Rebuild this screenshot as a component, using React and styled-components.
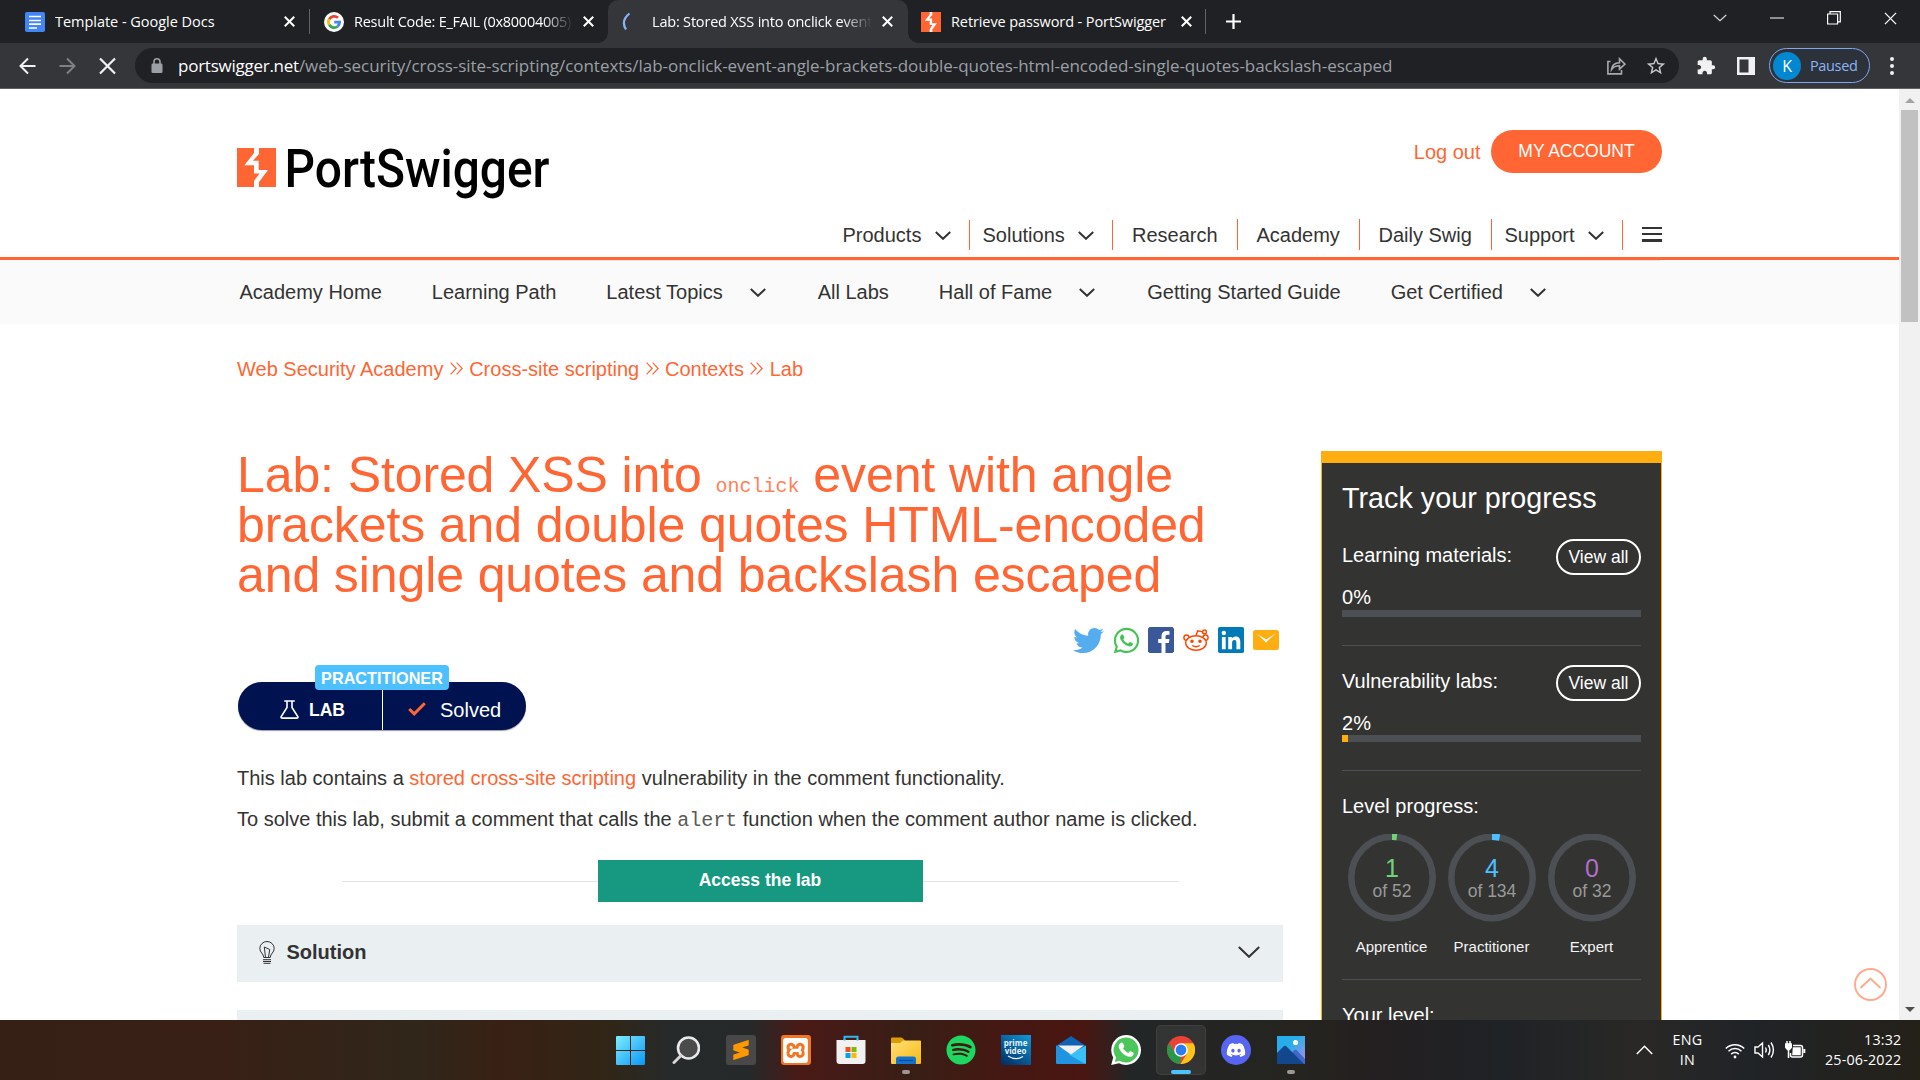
import React from 'react';
import styled, { createGlobalStyle, css } from 'styled-components';
import { FaTwitter, FaWhatsapp, FaDiscord, FaSpotify } from 'react-icons/fa';
import { MdExtension, MdStarBorder } from 'react-icons/md';
import { SiSublimetext, SiXampp } from 'react-icons/si';

const ORANGE = '#ff6633';
const UI = '"Open Sans", "Noto Sans", sans-serif';
const ARIAL = '"Liberation Sans", Arial, sans-serif';
const MONO = '"Liberation Mono", "Courier New", monospace';

const GlobalStyle = createGlobalStyle`
  *, *::before, *::after { box-sizing: border-box; }
  body { margin: 0; overflow: hidden; background: #fff; }
  svg { display: block; flex: none; }
`;

const Screen = styled.div`
  width: 1920px;
  height: 1080px;
  display: grid;
  grid-template-rows: 43px 46px 931px 60px;
  overflow: hidden;
  font-family: ${ARIAL};
`;

/* ---------- browser: tab strip ---------- */
const TabStrip = styled.div`
  display: flex;
  background: #202124;
  color: #fff;
  font-family: ${UI};
`;
const Tab = styled.div`
  position: relative;
  display: flex;
  align-items: center;
  width: ${p => p.$w}px;
  height: 43px;
  padding-left: ${p => p.$pad}px;
  ${p => p.$active && css`
    background: #35363a;
    border-radius: 10px 10px 0 0;
    &::before, &::after {
      content: '';
      position: absolute;
      bottom: 0;
      width: 10px;
      height: 10px;
    }
    &::before { left: -10px; background: radial-gradient(circle at 0 0, transparent 9.5px, #35363a 10px); }
    &::after { right: -10px; background: radial-gradient(circle at 100% 0, transparent 9.5px, #35363a 10px); }
  `}
`;
const TabTitle = styled.span`
  width: ${p => p.$w}px;
  margin-left: ${p => p.$ml || 10}px;
  margin-right: ${p => p.$mr || 0}px;
  overflow: hidden;
  white-space: nowrap;
  font-size: 14.5px;
  line-height: 24px;
  letter-spacing: ${p => p.$ls || 0}px;
  ${p => p.$fade && css`
    mask-image: linear-gradient(90deg, #000 calc(100% - 30px), transparent);
  `}
`;
const Divider = styled.i`
  width: 1px;
  height: 25px;
  margin-top: 9px;
  background: #606368;
`;
const NewTab = styled.div`
  display: flex;
  align-items: center;
  margin-left: 20px;
`;
const WindowControls = styled.div`
  display: flex;
  gap: 43px;
  height: 36px;
  align-items: center;
  margin-left: auto;
  margin-right: 23px;
`;

/* ---------- browser: toolbar ---------- */
const Toolbar = styled.div`
  display: flex;
  align-items: center;
  background: #35363a;
  border-bottom: 1px solid #606164;
  padding: 0 0 0 18px;
  font-family: ${UI};
`;
const NavButtons = styled.div`
  display: flex;
  gap: 20px;
  width: 117px;
`;
const Omnibox = styled.div`
  display: flex;
  align-items: center;
  width: 1544px;
  height: 35px;
  padding: 0 12px 0 16px;
  border-radius: 18px;
  background: #202124;
`;
const Url = styled.span`
  flex: 1;
  margin-left: 15px;
  white-space: nowrap;
  font-size: 17px;
  line-height: 30px;
  letter-spacing: -0.04px;
  color: #9aa0a6;
  b { font-weight: 400; color: #fff; letter-spacing: -0.25px; }
`;
const OmniActions = styled.div`
  display: flex;
  gap: 19px;
  align-items: center;
`;
const Extensions = styled.div`
  display: flex;
  align-items: center;
  gap: 21px;
  margin-left: 17px;
`;
const Profile = styled.div`
  display: flex;
  align-items: center;
  width: 101px;
  height: 35px;
  margin-left: 14px;
  padding-left: 3px;
  border: 1px solid #7fa6ee;
  border-radius: 18px;
  background: #2d3139;
  color: #8ab4f8;
  font-size: 14.5px;
  letter-spacing: -0.35px;
`;
const Avatar = styled.span`
  width: 28px;
  height: 28px;
  margin-right: 9px;
  border-radius: 50%;
  background: #0288d1;
  color: #fff;
  font: 16px/28px ${UI};
  text-align: center;
`;
const MenuDots = styled.div`
  display: grid;
  gap: 3px;
  margin-left: 20px;
  i { width: 4px; height: 4px; border-radius: 50%; background: #f1f1f3; }
`;

/* ---------- page ---------- */
const Viewport = styled.div`
  display: flex;
  overflow: hidden;
  background: #fff;
`;
const Page = styled.div`
  position: relative;
  width: 1899px;
  height: 931px;
  overflow: hidden;
  color: #333332;
`;
const Container = styled.div`
  width: 1425px;
  margin-left: 237px;
`;
const Header = styled.header`
  height: 171px;
  border-bottom: 3px solid ${ORANGE};
`;
const HeaderTop = styled.div`
  display: flex;
  justify-content: space-between;
  align-items: flex-start;
  height: 130px;
`;
const LogoMark = styled.svg`
  margin-top: 52px;
  overflow: visible;
`;
const Account = styled.div`
  display: flex;
  align-items: center;
  margin-top: 41px;
  color: ${ORANGE};
  font-size: 20px;
`;
const LogOut = styled.span`
  padding-top: 1px;
`;
const AccountButton = styled.span`
  width: 171px;
  height: 43px;
  margin-left: 10.5px;
  border-radius: 22px;
  background: ${ORANGE};
  color: #fff;
  font-size: 17.5px;
  line-height: 42px;
  text-align: center;
`;
const MainNav = styled.nav`
  display: flex;
  justify-content: flex-end;
  align-items: center;
  height: 31px;
  font-size: 20px;
`;
const NavItem = styled.div`
  display: flex;
  justify-content: space-between;
  align-items: center;
  width: ${p => p.$w}px;
  height: ${p => (p.$tall ? 31 : 30)}px;
  padding: ${p => (p.$tall ? 2 : 0)}px 18px 0 ${p => p.$pad}px;
  align-self: flex-end;
  border-right: 1px solid ${ORANGE};
  white-space: nowrap;
`;
const Burger = styled.div`
  display: grid;
  gap: 4px;
  margin-left: 19px;
  i { width: 20px; height: 2px; background: #333332; }
  i:last-child { height: 3px; }
`;
const SubNav = styled.nav`
  height: 64px;
  background: #fafafa;
`;
const SubNavRow = styled.div`
  display: flex;
  align-items: center;
  gap: 50px;
  width: 1420px;
  height: 64px;
  margin-left: 239.5px;
  border-top: 1px solid #e3e3e8;
  font-size: 20px;
  span { display: flex; align-items: center; white-space: nowrap; }
  svg { margin: 0 2px 0 27px; }
`;
const Breadcrumb = styled.div`
  display: flex;
  align-items: center;
  gap: 6.4px;
  height: 24px;
  margin-top: 33px;
  color: ${ORANGE};
  font-size: 20px;
  svg { margin-top: -1px; }
`;
const Columns = styled.div`
  display: flex;
  justify-content: space-between;
`;
const Main = styled.main`
  width: 1046px;
  padding-top: 69px;
`;
const Title = styled.h1`
  margin: 0;
  height: 150px;
  font-size: 50px;
  line-height: 50px;
  font-weight: 400;
  letter-spacing: -0.11px;
  white-space: nowrap;
  color: ${ORANGE};
  code { font: 20px/20px ${MONO}; letter-spacing: 0; color: #ff8259; }
`;
const ShareRow = styled.div`
  display: flex;
  justify-content: flex-end;
  align-items: center;
  gap: 9px;
  height: 26px;
  margin-top: 27px;
  padding-right: 4px;
`;
const ShareWhatsapp = styled(FaWhatsapp)`
  margin: 0 -1.5px;
`;
const ShareTwitter = styled(FaTwitter)`
  margin-right: 0.5px;
`;
const Badge = styled.div`
  position: relative;
  display: flex;
  width: 288px;
  height: 48px;
  margin: 29px 0 0 1px;
  border-radius: 24px;
  background: #001350;
  box-shadow: 0 1px 1px 0 #9a9aa8;
  color: #fff;
`;
const Level = styled.span`
  position: absolute;
  left: 77px;
  top: -17px;
  width: 134px;
  height: 25px;
  border-radius: 4px;
  background: #4dc0ff;
  font-size: 16.25px;
  font-weight: 700;
  line-height: 26px;
  text-align: center;
`;
const BadgeHalf = styled.span`
  display: flex;
  align-items: center;
  width: ${p => p.$w}px;
  padding: 8px 0 0 ${p => p.$pad}px;
  gap: ${p => p.$gap}px;
  border-right: ${p => (p.$line ? '1px solid #fff' : '0')};
  font-size: ${p => (p.$line ? 17.5 : 20)}px;
  font-weight: ${p => (p.$line ? 700 : 400)};
  svg { margin-top: -2px; }
`;
const Para = styled.p`
  margin: ${p => p.$mt}px 0 0;
  font-size: 20px;
  line-height: 30px;
  white-space: nowrap;
  a { color: ${ORANGE}; }
  code { font: 20px/20px ${MONO}; color: #5a5a59; }
`;
const AccessRow = styled.div`
  display: flex;
  align-items: center;
  justify-content: center;
  width: 1046px;
  height: 42px;
  margin: 26px 0 23px;
  i { width: 256px; height: 1px; background: #e4e4e6; }
`;
const AccessButton = styled.span`
  width: 325px;
  height: 42px;
  background: #169980;
  color: #fff;
  font-size: 17.5px;
  font-weight: 700;
  line-height: 41px;
  text-align: center;
`;
const Accordion = styled.div`
  display: flex;
  align-items: center;
  height: 57px;
  margin-bottom: 28px;
  padding: 0 23px 3px 22px;
  background: #eaeff2;
  font-size: 20px;
  font-weight: 700;
  span { flex: 1; margin-left: 11.5px; }
`;

/* ---------- progress panel ---------- */
const Panel = styled.aside`
  width: 341px;
  height: 640px;
  margin-top: 70px;
  padding: 0 20px;
  border: 1px solid #ffae12;
  border-top-width: 12px;
  background: #333332;
  color: #fff;
  font-size: 20px;
`;
const PanelTitle = styled.div`
  height: 76px;
  padding-top: 18px;
  font-size: 28.75px;
  line-height: 34px;
`;
const Stat = styled.section`
  height: 126px;
`;
const StatHead = styled.div`
  display: flex;
  justify-content: space-between;
  height: 36px;
  line-height: 32px;
`;
const ViewAll = styled.span`
  width: 85px;
  height: 36px;
  border: 2px solid #fff;
  border-radius: 18px;
  font-size: 17.5px;
  text-align: center;
`;
const Percent = styled.div`
  height: ${p => p.$h}px;
  line-height: 44px;
`;
const Track = styled.div`
  height: 7px;
  background: #4c4f54;
`;
const Fill = styled.div`
  width: ${p => p.$value}%;
  height: 7px;
  background: #ffae12;
`;
const Rule = styled.div`
  height: 1px;
  margin-top: ${p => p.$mt}px;
  background: #4c4f54;
`;
const SectionLabel = styled.div`
  height: ${p => (p.$first ? 43 : 63)}px;
  padding-top: ${p => (p.$first ? 0 : 20)}px;
  line-height: 30px;
`;
const Rings = styled.div`
  display: flex;
  gap: 12px;
  margin-left: 5.5px;
`;
const Ring = styled.div`
  display: flex;
  flex-direction: column;
  align-items: center;
  width: 88px;
  font-size: 15px;
  color: #f4f4f4;
`;
const RingLabel = styled.span`
  margin-top: 16px;
  line-height: 18px;
`;
const ScrollTop = styled.div`
  position: absolute;
  left: 1854px;
  top: 879px;
`;

/* ---------- scrollbar ---------- */
const Scrollbar = styled.div`
  display: flex;
  flex-direction: column;
  align-items: center;
  width: 21px;
  height: 931px;
  padding: 9px 0 8px;
  background: #f1f1f1;
`;
const Thumb = styled.i`
  width: 17px;
  height: 212px;
  margin: 7px 0 auto;
  background: #c1c1c1;
`;
const Caret = styled.i`
  border: 5px solid transparent;
  border-${p => (p.$up ? 'bottom' : 'top')}-color: ${p => (p.$up ? '#a3a3a3' : '#505050')};
  border-${p => (p.$up ? 'top' : 'bottom')}-width: 0;
`;

/* ---------- taskbar ---------- */
const Taskbar = styled.footer`
  display: flex;
  justify-content: space-between;
  align-items: center;
  padding-left: 605.5px;
  background: linear-gradient(90deg,
    #361f14 0, #382016 230px, #30261a 420px, #392014 500px, #302617 610px,
    #262a2a 670px, #26292a 750px, #4a1a16 800px, #421b17 850px, #381f15 910px,
    #451813 1000px, #491611 1085px, #232627 1130px, #25241f 1300px,
    #241f20 1370px, #1f2226 1500px, #292826 1640px, #202327 1750px, #242119 1920px);
  color: #fff;
  font-family: ${UI};
`;
const Apps = styled.div`
  display: flex;
  gap: 5px;
`;
const AppSlot = styled.div`
  position: relative;
  display: flex;
  align-items: center;
  justify-content: center;
  width: 50px;
  height: 50px;
  border-radius: 5px;
  ${p => p.$active && css`background: rgba(255,255,255,.07); box-shadow: inset 0 0 0 1px rgba(255,255,255,.06);`}
  ${p => p.$bar && css`
    &::after {
      content: '';
      position: absolute;
      bottom: 1px;
      left: ${25 - p.$bar / 2}px;
      width: ${p.$bar}px;
      height: 4px;
      border-radius: 2px;
      background: ${p.$active ? '#4cc2ff' : '#9d9896'};
    }
  `}
`;
const Tile = styled.div`
  display: flex;
  align-items: center;
  justify-content: center;
  width: 30px;
  height: 30px;
  border-radius: 3px;
  background: ${p => p.$bg};
`;
const Prime = styled.div`
  width: 30px;
  height: 30px;
  padding-top: 4px;
  background: linear-gradient(35deg, #022a60, #0a6aa8 60%, #0e9bd8);
  color: #e8f5fb;
  font: 700 8px/8px ${UI};
  text-align: center;
  svg { margin: 0 auto; }
`;
const Tray = styled.div`
  display: flex;
  align-items: center;
  padding-right: 18.5px;
  font-size: 14.3px;
  line-height: 20px;
`;
const Lang = styled.div`
  width: 40px;
  margin: 0 17px 0 15px;
  text-align: center;
  letter-spacing: 0.3px;
`;
const TrayIcons = styled.div`
  display: flex;
  gap: 9.5px;
  align-items: center;
  width: 81px;
`;
const Clock = styled.div`
  width: 84px;
  margin-left: 12px;
  text-align: right;
  letter-spacing: 0.2px;
  white-space: nowrap;
`;

/* ---------- drawings ---------- */
const Cross = ({ s = 11, w = 2, c = '#fff' }) => (
  <svg width={s} height={s} viewBox="0 0 10 10" stroke={c} strokeWidth={(w * 10) / s} fill="none"><path d="M.7.7l8.6 8.6M9.3.7L.7 9.3" /></svg>
);
const Chevron = ({ w = 16, h = 9, s = 2, c = '#333332', up }) => (
  <svg width={w} height={h} viewBox={`0 0 ${w} ${h}`} fill="none" stroke={c} strokeWidth={s}>
    <path d={up ? `M.8 ${h - 1}L${w / 2} 1.2L${w - 0.8} ${h - 1}` : `M.8 1L${w / 2} ${h - 1.2}L${w - 0.8} 1`} />
  </svg>
);
const DoubleChevron = () => (
  <svg width="13" height="13" viewBox="0 0 13 13" fill="none" stroke={ORANGE} strokeWidth="1.2"><path d="M.6.6l5.6 5.9L.6 12.4M6.6.6l5.6 5.9-5.6 5.9" /></svg>
);
const Bolt = () => (
  <>
    <path fill={ORANGE} d="M0 0h39v39H0z" />
    <path fill="#fff" d="M17 0h5v6l-6 6.700h5.700V22H31l-9 12v5h-5v-6l5.500-7.500H17v-8.200H7.400L17 5z" />
  </>
);
const BoltIcon = ({ s }) => <svg width={s} height={s} viewBox="0 0 39 39"><Bolt /></svg>;

const Lock = () => (
  <svg width="12" height="16" viewBox="0 0 12 16"><rect x="0.500" y="5.500" width="11" height="9.500" rx="1.300" fill="#9aa0a6" /><path d="M3 6V3.800a3 3 0 0 1 6 0V6" fill="none" stroke="#9aa0a6" strokeWidth="1.600" /></svg>
);

const GoogleG = () => (
  <svg width="20" height="20" viewBox="0 0 20 20">
    <circle cx="10" cy="10" r="10" fill="#fff" />
    <g fill="none" strokeWidth="2.8">
      <path stroke="#ea4335" d="M5.2 7.2A5.7 5.7 0 0 1 14 5.8" />
      <path stroke="#fbbc05" d="M5.2 12.8a5.7 5.7 0 0 1 0-5.6" />
      <path stroke="#34a853" d="M13.6 14.5a5.7 5.7 0 0 1-8.4-1.7" />
      <path stroke="#4285f4" d="M10.2 10.1h5.4a5.7 5.7 0 0 1-2 4.4" />
    </g>
  </svg>
);

const ProgressRing = ({ n, of, color, label, frac }) => {
  const r = 40.7;
  const len = 2 * Math.PI * r;
  return (
    <Ring>
      <svg width="88" height="88" viewBox="0 0 88 88" fontFamily={ARIAL} textAnchor="middle">
        <circle cx="44" cy="43.500" r={r} fill="none" stroke="#4c4f54" strokeWidth="6.5" />
        {frac > 0 && <circle cx="44" cy="43.500" r={r} fill="none" stroke={color} strokeWidth="6.5" strokeDasharray={`${frac * len} ${len}`} transform="rotate(-90 44 43.5)" />}
        <text x="44" y="43" fontSize="25" fill={color}>{n}</text>
        <text x="44" y="63" fontSize="17.5" fill="#999a98">{`of ${of}`}</text>
      </svg>
      <RingLabel>{label}</RingLabel>
    </Ring>
  );
};

const StatBlock = ({ label, value, gap }) => (
  <Stat>
    <StatHead><span>{label}</span><ViewAll>View all</ViewAll></StatHead>
    <Percent $h={gap}>{value}%</Percent>
    <Track>{value > 0 && <Fill $value={value} />}</Track>
    <Rule $mt={28} />
  </Stat>
);

const Bulb = () => (
  <svg width="16" height="23" viewBox="0 0 16 23" fill="none" stroke="#333332" strokeWidth="1">
    <path d="M4.800 16.500C4.500 12.500.8 11.500.8 7.500a7.200 7 0 0 1 14.400 0c0 4-3.700 5-4 9zM6.500 16.500L5.300 6l5.400 2.500-1.200 8M4 18.700h8M4 20.500h8M4.500 22.300h7" />
  </svg>
);
const Flask = () => (
  <svg width="19" height="19" viewBox="0 0 19 19" fill="none" stroke="#fff" strokeWidth="1.600">
    <path d="M4.200 1h10.600M7 1v6.500L1.200 16.500q-.6 1.500 1.200 1.600h14.200q1.800-.1 1.200-1.600L12 7.500V1" />
  </svg>
);

const ShareIcons = () => (
  <ShareRow>
    <ShareTwitter size={31} color="#55acee" />
    <ShareWhatsapp size={29} color="#43c353" />
    <svg width="26" height="26" viewBox="0 0 26 26"><path fill="#3b5998" d="M1.500 0h23L26 1.500v23L24.500 26h-23L0 24.500v-23z" /><path fill="#fff" d="M13.500 26V16h-3.300v-4h3.300V9c0-3.400 2-5 5-5 1.400 0 2.600.1 3 .2v3.500h-2c-1.600 0-2 .8-2 2V12h3.900l-.5 4h-3.400v10z" /></svg>
    <svg width="26" height="22" viewBox="0 0 26 22" fill="none" stroke="#ff4500" strokeWidth="1.400">
      <ellipse cx="13" cy="14" rx="10.300" ry="7.200" />
      <path d="M3.500 11.200a2.600 2.600 0 1 1 2.600-2.800M22.500 11.200a2.600 2.600 0 1 0-2.600-2.800M13 6.800l1.700-5 5 1.100M9.200 16.500q3.800 2.600 7.600 0" />
      <circle cx="21.500" cy="2.900" r="1.900" />
      <circle cx="9" cy="12.300" r="1.100" fill="#ff4500" /><circle cx="17" cy="12.300" r="1.100" fill="#ff4500" />
    </svg>
    <svg width="26" height="26" viewBox="0 0 26 26"><rect width="26" height="26" rx="1.800" fill="#007ab9" /><path fill="#fff" d="M3.900 9.900h3.800v12.300H3.900zM10.200 9.900h3.600v1.700c.6-1 1.900-2 3.800-2 3.900 0 4.700 2.500 4.700 5.900v6.700h-3.900v-6c0-1.500 0-3.300-2-3.300s-2.300 1.600-2.300 3.200v6.100h-3.900z" /><circle cx="5.800" cy="6" r="2.200" fill="#fff" /></svg>
    <svg width="26" height="20" viewBox="0 0 26 20"><rect width="26" height="20" rx="2.500" fill="#ffae12" /><path d="M3 3.300c4 3 7 6.500 10 9.300 3-2.800 6-6.300 10-9.300-4 2.300-7 4.300-10 6.200-3-1.900-6-3.900-10-6.200z" fill="#fff" /></svg>
  </ShareRow>
);

const Windows = () => (
  <svg width="29" height="29" viewBox="0 0 29 29">
    <defs><linearGradient id="win" x1="0" y1="0" x2="1" y2="1" gradientUnits="objectBoundingBox"><stop offset="0" stopColor="#7deeff" /><stop offset="1" stopColor="#0a97f5" /></linearGradient></defs>
    <path fill="url(#win)" d="M0 1q0-1 1-1h13v14H0zM15 0h13q1 0 1 1v13H15zM0 15h14v14H1q-1 0-1-1zM15 15h14v13q0 1-1 1H15z" />
  </svg>
);
const Search = () => (
  <svg width="28" height="28" viewBox="0 0 28 28"><circle cx="16.500" cy="12" r="10.500" fill="#4a4b4b" stroke="#e9e9ea" strokeWidth="2.600" /><path d="M9 19.500L2 26.500" stroke="#d6d6d8" strokeWidth="3" strokeLinecap="round" /></svg>
);
const Store = () => (
  <svg width="30" height="30" viewBox="0 0 30 30"><path d="M8.500 8V1.800h13V8" fill="none" stroke="#2fb8ee" strokeWidth="2" /><path d="M.5 5h29v21q0 3-3 3h-23q-3 0-3-3z" fill="#f1f1f1" /><path d="M8.500 5.500V4M21.500 5.500V4" stroke="#2fb8ee" strokeWidth="2" /><path fill="#f25022" d="M9.500 12h5v5h-5z" /><path fill="#7fba00" d="M15.500 12h5v5h-5z" /><path fill="#00a4ef" d="M9.500 18h5v5h-5z" /><path fill="#ffb900" d="M15.500 18h5v5h-5z" /></svg>
);
const Folder = () => (
  <svg width="30" height="27" viewBox="0 0 30 27">
    <defs><linearGradient id="fold" x1="0" y1="0" x2="1" y2="1"><stop offset="0" stopColor="#ffe07a" /><stop offset="1" stopColor="#f9b912" /></linearGradient></defs>
    <path d="M0 1.500Q0 .5 1 .5h9q1 0 2 1l2 2-3 4H0z" fill="#dc9c05" /><path d="M0 6h9l3-2.500h17q1 0 1 1V26q0 1-1 1H1q-1 0-1-1z" fill="url(#fold)" /><path d="M5 27v-5q0-2.500 2.500-2.500h15q2.500 0 2.500 2.500v5z" fill="#1273cf" /><path d="M8 23.500h14" stroke="#0a4c98" strokeWidth="1.300" />
  </svg>
);
const Mail = () => (
  <svg width="30" height="28" viewBox="0 0 30 28"><path d="M0 10L15 0l15 10v4H0z" fill="#0f62b4" /><path d="M0 9.500V27q0 1 1 1h28L12 15z" fill="#2094e0" /><path d="M30 9.500V27q0 1-1 1L13 18.500z" fill="#38c0f7" /><path d="M2 9.500h26L15 18.500z" fill="#f0f0f0" /></svg>
);
const WhatsAppTile = () => (
  <svg width="30" height="30" viewBox="0 0 30 30"><path d="M15 0a15 15 0 0 1 0 30 15 15 0 0 1-7-1.700L.2 30l2-7.500A15 15 0 0 1 15 0z" fill="#fff" /><path d="M15 2.500a12.500 12.500 0 0 1 0 25 12.500 12.500 0 0 1-6.500-1.800l-4.700 1.300 1.300-4.600A12.500 12.500 0 0 1 15 2.500z" fill="#4bc65a" /><path d="M10.500 7.500q1.100-.3 1.700 1l1 2.300q.3.800-.3 1.400l-.9 1.100c1.300 2.300 2.800 3.700 5.200 4.700l1.300-1.500q.5-.6 1.200-.2l2.500 1.200c1.300.6-.1 3.700-2.200 4.200-2.500.6-7.300-1.800-9.600-4.800-2-2.600-3.800-5.400-1.800-8 .6-.8 1.200-1.200 1.900-1.400z" fill="#fff" /></svg>
);
const ChromeLogo = () => (
  <svg width="28" height="28" viewBox="0 0 28 28"><circle cx="14" cy="14" r="14" fill="#ea4335" /><path d="M1.900 7L8.200 17.500 14 21l-.5 7A14 14 0 0 1 1.900 7z" fill="#279847" /><path d="M14 7.300h12.300A14 14 0 0 1 13.500 28L20 17.500z" fill="#fcc419" /><circle cx="14" cy="14" r="6.800" fill="#fff" /><circle cx="14" cy="14" r="5.400" fill="#2e7df0" /></svg>
);
const Photos = () => (
  <svg width="28" height="28" viewBox="0 0 28 28">
    <defs><linearGradient id="sky" x1="0" y1="0" x2="1" y2="1"><stop offset=".4" stopColor="#27aeea" /><stop offset="1" stopColor="#b28be6" /></linearGradient></defs>
    <path d="M0 0h28v28H0z" fill="url(#sky)" /><path d="M14 17l3.500-3q1-.8 2 0L28 23v5H14z" fill="#4167c8" /><path d="M0 17l6.500-6.500q1.500-1.300 3 0L27 28H0z" fill="#12478e" /><circle cx="18.500" cy="6.500" r="2.600" fill="#fff" />
  </svg>
);

export default function App() {
  return (
    <>
      <GlobalStyle />
      <Screen>
        <TabStrip>
          <Tab $w={309} $pad={25}>
            <svg width="20" height="20" viewBox="0 0 20 20"><rect width="20" height="20" rx="1.800" fill="#4285f4" /><path d="M4 4.500h12M4 8.500h12M4 12.200h12M4 16h8" stroke="#fff" strokeWidth="1.700" /></svg>
            <TabTitle $w={229} $ls={-0.03}>Template - Google Docs</TabTitle>
            <Cross />
          </Tab>
          <Divider />
          <Tab $w={298} $pad={14}>
            <GoogleG />
            <TabTitle $w={219} $mr={10} $fade $ls={-0.25}>Result Code: E_FAIL (0x80004005)</TabTitle>
            <Cross />
          </Tab>
          <Tab $w={300} $pad={14} $active>
            <svg width="10" height="20" viewBox="0 0 10 20" fill="none" stroke="#8ab4f8" strokeWidth="2.200"><path d="M7.500 1.500Q-1.500 8.500 4 17.500" /></svg>
            <TabTitle $w={220} $ml={20} $mr={10} $fade $ls={-0.19}>Lab: Stored XSS into onclick event</TabTitle>
            <Cross />
          </Tab>
          <Tab $w={297} $pad={13}>
            <BoltIcon s={20} />
            <TabTitle $w={230} $ml={10} $ls={-0.1}>Retrieve password - PortSwigger</TabTitle>
            <Cross />
          </Tab>
          <Divider />
          <NewTab><svg width="15" height="15" viewBox="0 0 15 15" stroke="#fff" strokeWidth="2.200"><path d="M7.500 0v15M0 7.500h15" /></svg></NewTab>
          <WindowControls>
            <Chevron w={14} h={8} s={1.2} c="#d8d8d8" />
            <svg width="14" height="2" viewBox="0 0 14 2"><path d="M0 .5h14v1H0z" fill="#fff" /></svg>
            <svg width="14" height="14" viewBox="0 0 14 14" fill="none" stroke="#fff" strokeWidth="1.200"><path d="M.6 3h10v10H.6zM3 3V.6h10.300v10.300H11" /></svg>
            <Cross s={13} w={1.3} />
          </WindowControls>
        </TabStrip>

        <Toolbar>
          <NavButtons>
            <svg width="20" height="20" viewBox="0 0 20 20" fill="none" stroke="#f1f1f3" strokeWidth="2"><path d="M17.500 10H3M10 2.500L2.500 10l7.500 7.500" /></svg>
            <svg width="20" height="20" viewBox="0 0 20 20" fill="none" stroke="#808184" strokeWidth="2"><path d="M1.500 10H16M9 2.500l7.500 7.500L9 17.500" /></svg>
            <svg width="20" height="20" viewBox="0 0 20 20" fill="none" stroke="#f1f1f3" strokeWidth="2.200"><path d="M2 2.500l15 15M17 2.500l-15 15" /></svg>
          </NavButtons>
          <Omnibox>
            <Lock />
            <Url><b>portswigger.net</b>/web-security/cross-site-scripting/contexts/lab-onclick-event-angle-brackets-double-quotes-html-encoded-single-quotes-backslash-escaped</Url>
            <OmniActions>
              <svg width="19" height="18" viewBox="0 0 19 18" fill="none" stroke="#a9aaad" strokeWidth="1.600"><path d="M3.500 4.500H.9v12.400h13.600V13M4.500 12.500q.5-6.500 8-6.800V1.800L18 7.200l-5.500 5V8.800q-5.500 0-8 3.700z" /></svg>
              <MdStarBorder size={22} color="#c6c7ca" />
            </OmniActions>
          </Omnibox>
          <Extensions>
            <MdExtension size={20} color="#f1f1f3" />
            <svg width="18" height="18" viewBox="0 0 18 18"><path fill="#f1f1f3" fillRule="evenodd" d="M0 0h18v18H0zM2.500 2.500v13h9v-13z" /></svg>
          </Extensions>
          <Profile><Avatar>K</Avatar>Paused</Profile>
          <MenuDots><i /><i /><i /></MenuDots>
        </Toolbar>

        <Viewport>
          <Page>
            <Header>
              <Container>
                <HeaderTop>
                  <LogoMark width="315" height="60" viewBox="0 0 315 60">
                    <g transform="translate(0 7)">
                      <Bolt />
                      <text x="47.500" y="38.500" fontFamily='Roboto, "Open Sans", sans-serif' fontSize="54" fontWeight="500" textLength="265" lengthAdjust="spacingAndGlyphs" fill="#000">PortSwigger</text>
                    </g>
                  </LogoMark>
                  <Account><LogOut>Log out</LogOut><AccountButton>MY ACCOUNT</AccountButton></Account>
                </HeaderTop>
                <MainNav>
                  <NavItem $w={127.5} $pad={0}>Products<Chevron /></NavItem>
                  <NavItem $w={143} $pad={12.5}>Solutions<Chevron /></NavItem>
                  <NavItem $w={125} $pad={19} $tall>Research</NavItem>
                  <NavItem $w={122} $pad={18.5} $tall>Academy</NavItem>
                  <NavItem $w={132} $pad={18.5} $tall>Daily Swig</NavItem>
                  <NavItem $w={131} $pad={12.5}>Support<Chevron /></NavItem>
                  <Burger><i /><i /><i /></Burger>
                </MainNav>
              </Container>
            </Header>
            <SubNav>
              <SubNavRow>
                <span>Academy Home</span>
                <span>Learning Path</span>
                <span>Latest Topics<Chevron /></span>
                <span>All Labs</span>
                <span>Hall of Fame<Chevron /></span>
                <span>Getting Started Guide</span>
                <span>Get Certified<Chevron /></span>
              </SubNavRow>
            </SubNav>
            <Container>
              <Breadcrumb>
                <span>Web Security Academy</span><DoubleChevron />
                <span>Cross-site scripting</span><DoubleChevron />
                <span>Contexts</span><DoubleChevron />
                <span>Lab</span>
              </Breadcrumb>
              <Columns>
                <Main>
                  <Title>
                    Lab: Stored XSS into <code>onclick</code> event with angle<br />
                    brackets and double quotes HTML-encoded<br />
                    and single quotes and backslash escaped
                  </Title>
                  <ShareIcons />
                  <Badge>
                    <BadgeHalf $w={145} $pad={41.5} $gap={10.5} $line><Flask />LAB</BadgeHalf>
                    <BadgeHalf $w={143} $pad={24.5} $gap={14.5}>
                      <svg width="18" height="14" viewBox="0 0 18 14" fill="none" stroke={ORANGE} strokeWidth="3"><path d="M1.200 7l5 4.800L16.800 1.200" /></svg>
                      Solved
                    </BadgeHalf>
                    <Level>PRACTITIONER</Level>
                  </Badge>
                  <Para $mt={33}>This lab contains a <a>stored cross-site scripting</a> vulnerability in the comment functionality.</Para>
                  <Para $mt={11}>To solve this lab, submit a comment that calls the <code>alert</code> function when the comment author name is clicked.</Para>
                  <AccessRow><i /><AccessButton>Access the lab</AccessButton><i /></AccessRow>
                  <Accordion><Bulb /><span>Solution</span><Chevron w={22} h={12} s={2} /></Accordion>
                  <Accordion />
                </Main>
                <Panel>
                  <PanelTitle>Track your progress</PanelTitle>
                  <StatBlock label="Learning materials:" value={0} gap={35} />
                  <StatBlock label="Vulnerability labs:" value={2} gap={34} />
                  <SectionLabel $first>Level progress:</SectionLabel>
                  <Rings>
                    <ProgressRing n="1" of="52" color="#71d279" label="Apprentice" frac={1 / 52} />
                    <ProgressRing n="4" of="134" color="#4dc0ff" label="Practitioner" frac={4 / 134} />
                    <ProgressRing n="0" of="32" color="#b06fc8" label="Expert" frac={0} />
                  </Rings>
                  <Rule $mt={23} />
                  <SectionLabel>Your level:</SectionLabel>
                </Panel>
              </Columns>
            </Container>
            <ScrollTop>
              <svg width="33" height="33" viewBox="0 0 33 33" fill="none" stroke="#ffaa8d" strokeWidth="1.900"><circle cx="16.500" cy="16.500" r="15.500" /><path d="M6.500 20l10-9.500 10 9.500" /></svg>
            </ScrollTop>
          </Page>
          <Scrollbar><Caret $up /><Thumb /><Caret /></Scrollbar>
        </Viewport>

        <Taskbar>
          <Apps>
            <AppSlot><Windows /></AppSlot>
            <AppSlot><Search /></AppSlot>
            <AppSlot><Tile $bg="#484848"><SiSublimetext size={20} color="#ff9800" /></Tile></AppSlot>
            <AppSlot><Tile $bg="#f07623"><SiXampp size={25} color="#fff" /></Tile></AppSlot>
            <AppSlot><Store /></AppSlot>
            <AppSlot $bar={8}><Folder /></AppSlot>
            <AppSlot><FaSpotify size={30} color="#1ed760" /></AppSlot>
            <AppSlot><Prime>prime<br />video<svg width="18" height="5" viewBox="0 0 18 5" fill="none" stroke="#e8f5fb" strokeWidth="1.200"><path d="M1 1q8 5 15 .5" /></svg></Prime></AppSlot>
            <AppSlot><Mail /></AppSlot>
            <AppSlot><WhatsAppTile /></AppSlot>
            <AppSlot $active $bar={20}><ChromeLogo /></AppSlot>
            <AppSlot><svg width="30" height="30" viewBox="0 0 30 30"><circle cx="15" cy="15" r="15" fill="#5865f2" /><FaDiscord x="5" y="5" size={20} color="#fff" /></svg></AppSlot>
            <AppSlot $bar={8}><Photos /></AppSlot>
          </Apps>
          <Tray>
            <Chevron w={17} h={10} s={1.5} c="#fff" up />
            <Lang>ENG<br />IN</Lang>
            <TrayIcons>
              <svg width="20" height="17" viewBox="0 0 20 17" fill="none" stroke="#fff" strokeWidth="1.500"><path d="M.8 6.500a13 13 0 0 1 18.400 0M3.500 9.300a9.200 9.200 0 0 1 13 0M6.200 12.100a5.400 5.400 0 0 1 7.600 0" /><circle cx="10" cy="15" r="1.400" fill="#fff" stroke="none" /></svg>
              <svg width="21" height="18" viewBox="0 0 21 18" fill="none" stroke="#fff" strokeWidth="1.400"><path d="M1 6h3l4.500-4v14L4 12H1zM11.500 6.500q1.500 2.500 0 5M14.300 4q3.200 5 0 10M17 1.500q4.800 7.500 0 15" /></svg>
              <svg width="21" height="18" viewBox="0 0 21 18" fill="none" stroke="#fff" strokeWidth="1.500"><path d="M8 4.500h7.500q2 0 2 2v7.500q0 2-2 2H7.500q-2 0-2-2v-2" /><path d="M8.500 7h6.500v6.500H8z" fill="#fff" /><path d="M19.300 8v4" strokeWidth="2" /><path d="M2 0v3M5 0v3M.8 3h5.400v3.500L4.500 8.500h-2L.8 6.500zM3.500 8v9" fill="#fff" /></svg>
            </TrayIcons>
            <Clock>13:32<br />25-06-2022</Clock>
          </Tray>
        </Taskbar>
      </Screen>
    </>
  );
}
